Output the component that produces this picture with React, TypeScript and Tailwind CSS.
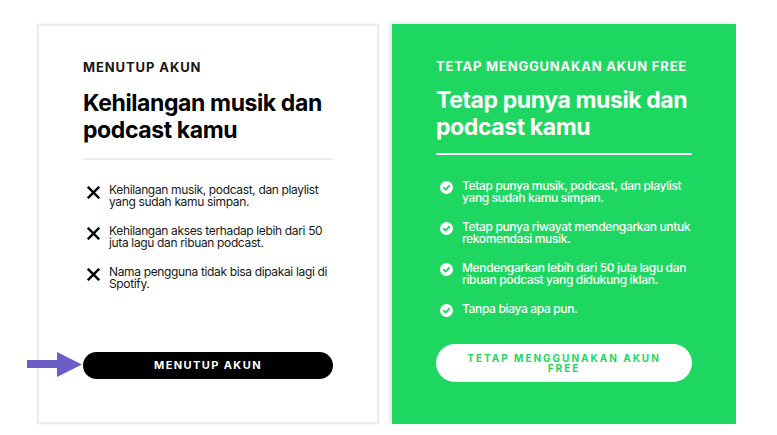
import React from "react"

const font = { fontFamily: "Inter, 'Noto Sans', sans-serif" }

const lossItems = [
  "Kehilangan musik, podcast, dan playlist yang sudah kamu simpan.",
  "Kehilangan akses terhadap lebih dari 50 juta lagu dan ribuan podcast.",
  "Nama pengguna tidak bisa dipakai lagi di Spotify.",
]

const keepItems = [
  "Tetap punya musik, podcast, dan playlist yang sudah kamu simpan.",
  "Tetap punya riwayat mendengarkan untuk rekomendasi musik.",
  "Mendengarkan lebih dari 50 juta lagu dan ribuan podcast yang didukung iklan.",
  "Tanpa biaya apa pun.",
]

function CrossIcon() {
  return (
    <svg width="13" height="13" viewBox="0 0 12 12" className="mt-[2px] shrink-0">
      <path d="M1.5 1.5 L10.5 10.5 M10.5 1.5 L1.5 10.5" stroke="#000" strokeWidth="2.2" strokeLinecap="square" />
    </svg>
  )
}

function CheckIcon() {
  return (
    <svg width="13" height="13" viewBox="0 0 14 14" className="mt-[1px] shrink-0">
      <circle cx="7" cy="7" r="7" fill="#fff" />
      <path d="M4 7.2 L6.1 9.2 L10 5" stroke="#1ed760" strokeWidth="2" fill="none" strokeLinecap="round" strokeLinejoin="round" />
    </svg>
  )
}

function Arrow() {
  return (
    <svg width="55" height="25" viewBox="0 0 55 25" className="absolute left-[-56px] top-[1px]">
      <rect x="0" y="8" width="31" height="8" fill="#6b5fc7" />
      <polygon points="30,0 55,12.5 30,25" fill="#6b5fc7" />
    </svg>
  )
}

export default function App() {
  return (
    <div className="min-h-screen w-[777px] h-[435px] bg-white" style={font}>
      <div className="flex pl-[37px] pt-[24px] gap-[13px]">
        {/* kartu kiri */}
        <div className="flex h-[400px] w-[342px] flex-col border-2 border-[#ececec] pl-[44px] pr-[44px] pt-[33px] pb-[43px] shadow-[0_0_3px_rgba(0,0,0,0.06)]">
          <div className="text-[13px] font-bold leading-[16px] tracking-[0.9px] text-[#181818]">MENUTUP AKUN</div>
          <h1 className="mt-[15px] text-[23px] font-bold leading-[27px] tracking-[-0.4px] text-black">
            Kehilangan musik dan podcast kamu
          </h1>
          <div className="mt-[14px] h-[2px] bg-[#ececec]" />
          <ul className="mt-[24px] flex flex-col gap-[17px]">
            {lossItems.map((t) => (
              <li key={t} className="flex gap-[9px] pl-[4px]">
                <CrossIcon />
                <span className="text-[12px] leading-[12px] tracking-[-0.35px] text-[#181818]">{t}</span>
              </li>
            ))}
          </ul>
          <div className="relative mt-auto">
            <Arrow />
            <button className="h-[27px] w-full rounded-full bg-black text-[11px] font-bold tracking-[1.4px] text-white">
              MENUTUP AKUN
            </button>
          </div>
        </div>

        {/* kartu kanan */}
        <div className="flex h-[400px] w-[344px] flex-col bg-[#1ed760] pl-[44px] pr-[44px] pt-[34px] shadow-[-2px_-1px_4px_rgba(0,0,0,0.12)]">
          <div className="whitespace-nowrap text-[13px] font-bold leading-[16px] tracking-[0.8px] text-white">TETAP MENGGUNAKAN AKUN FREE</div>
          <h1 className="mt-[13px] text-[23px] font-bold leading-[27px] tracking-[-0.4px] text-white">
            Tetap punya musik dan podcast kamu
          </h1>
          <div className="mt-[12px] h-[2px] bg-white" />
          <ul className="mt-[25px] flex flex-col gap-[17px]">
            {keepItems.map((t) => (
              <li key={t} className="flex gap-[9px] pl-[4px]">
                <CheckIcon />
                <span className="text-[12px] font-medium leading-[12px] tracking-[-0.35px] text-white">{t}</span>
              </li>
            ))}
          </ul>
          <button className="mt-[27px] h-[38px] w-full rounded-full bg-white px-[24px] text-[10px] font-bold leading-[10px] tracking-[2px] text-[#1ed760]">
            TETAP MENGGUNAKAN AKUN FREE
          </button>
        </div>
      </div>
    </div>
  )
}
